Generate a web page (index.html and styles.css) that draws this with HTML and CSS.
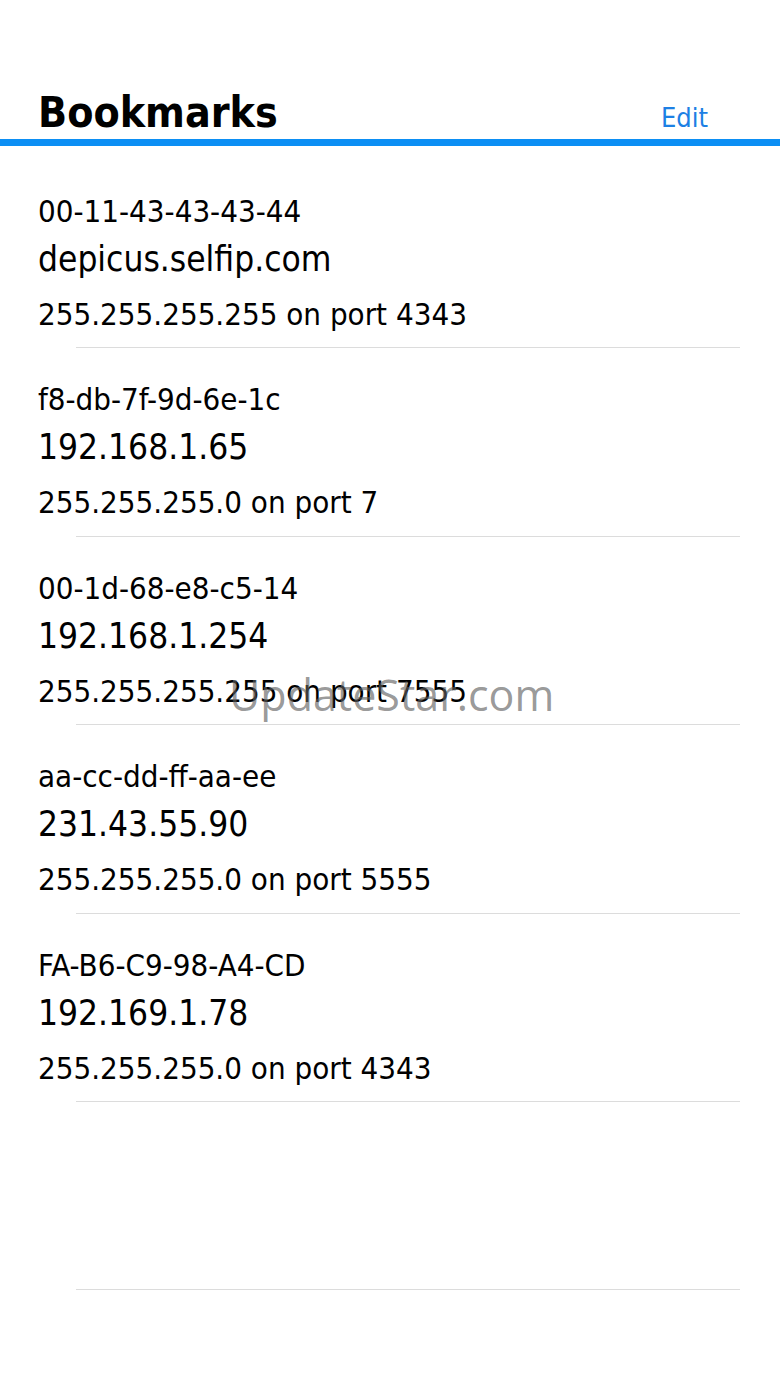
FILE: index.html
```html
<!DOCTYPE HTML>
<html>
  <head>
    <meta http-equiv="Content-Type" content="text/html; charset=utf-8" />
    <link rel="stylesheet" href="styles.css">
  </head>
  <body>
    <div class="head">
      <h1>Bookmarks</h1>
      <a class="edit" href="#">Edit</a>
    </div>
    <ul class="list">
      <li>
        <span class="mac">00-11-43-43-43-44</span>
        <span class="host">depicus.selfip.com</span>
        <span class="mask">255.255.255.255 on port 4343</span>
      </li>
      <li>
        <span class="mac">f8-db-7f-9d-6e-1c</span>
        <span class="host">192.168.1.65</span>
        <span class="mask">255.255.255.0 on port 7</span>
      </li>
      <li>
        <span class="mac">00-1d-68-e8-c5-14</span>
        <span class="host">192.168.1.254</span>
        <span class="mask">255.255.255.255 on port 7555</span>
      </li>
      <li>
        <span class="mac">aa-cc-dd-ff-aa-ee</span>
        <span class="host">231.43.55.90</span>
        <span class="mask">255.255.255.0 on port 5555</span>
      </li>
      <li>
        <span class="mac">FA-B6-C9-98-A4-CD</span>
        <span class="host">192.169.1.78</span>
        <span class="mask">255.255.255.0 on port 4343</span>
      </li>
      <li class="blank"></li>
    </ul>
    <div class="mark">UpdateStar.com</div>
  </body>
</html>
```

FILE: styles.css
```css
body       { background: white; color: black; font-family: "DejaVu Sans Condensed", "DejaVu Sans", sans-serif; font-stretch: condensed; margin: 0; }
.head      { display: flex; justify-content: space-between; align-items: baseline; padding: 92px 72px 5px 38px; border-bottom: 7px solid #0c8ff4; }
.head h1   { font-size: 42.5px; line-height: 42px; font-weight: bold; margin: 0; }
.edit      { color: #1d80e4; font-size: 27px; line-height: 27px; text-decoration: none; }
.list      { list-style: none; margin: 0; padding: 14px 0 0 0; }
.list li   { display: flex; flex-direction: column; box-sizing: border-box; height: 188.4px; padding: 28px 0 0 38px; }
.list li:after { content: ""; display: block; height: 1px; margin: auto 40px 0 38px; background: #dcdcdc; }
.mac       { font-size: 31px; line-height: 46px; }
.host      { font-size: 35px; line-height: 50px; }
.mask      { font-size: 31px; line-height: 60px; }
.mark      { position: absolute; left: 229px; top: 673px; font-family: "Open Sans", sans-serif; font-stretch: normal; font-size: 43px; line-height: 43px; color: rgba(95, 95, 95, 0.65); }
```
